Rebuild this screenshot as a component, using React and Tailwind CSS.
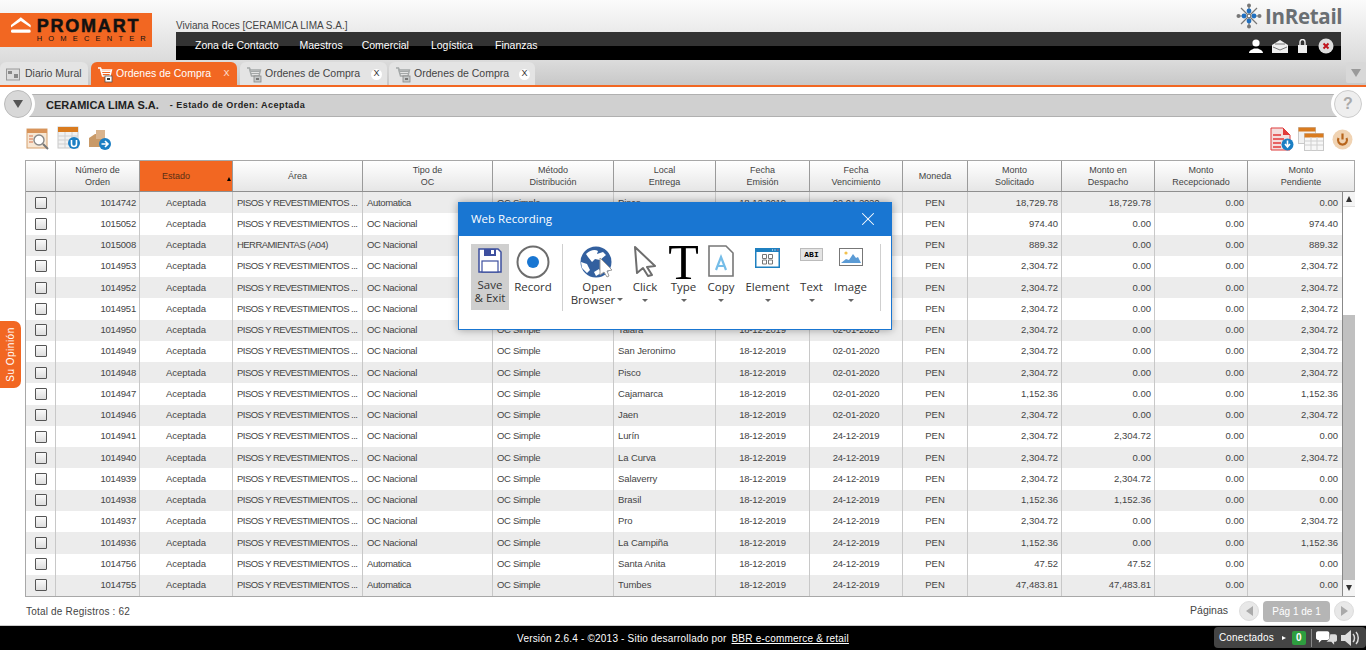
import { X } from "lucide-react";

const A = "2,304.72";
const P = "PISOS Y REVESTIMIENTOS ...";
const rows = [
    ["1014742", P, "Automatica", "OC Simple", "Pisco", "02-01-2020", "18,729.78", "18,729.78", "0.00"],
    ["1015052", P, "OC Nacional", "OC Simple", "Lurin", "02-01-2020", "974.40", "0.00", "974.40"],
    ["1015008", "HERRAMIENTAS (A04)", "OC Nacional", "OC Simple", "Pisco", "02-01-2020", "889.32", "0.00", "889.32"],
    ["1014953", P, "OC Nacional", "OC Simple", "Pisco", "02-01-2020", A, "0.00", A],
    ["1014952", P, "OC Nacional", "OC Simple", "Pisco", "02-01-2020", A, "0.00", A],
    ["1014951", P, "OC Nacional", "OC Simple", "Pisco", "02-01-2020", A, "0.00", A],
    ["1014950", P, "OC Nacional", "OC Simple", "Talara", "02-01-2020", A, "0.00", A],
    ["1014949", P, "OC Nacional", "OC Simple", "San Jeronimo", "02-01-2020", A, "0.00", A],
    ["1014948", P, "OC Nacional", "OC Simple", "Pisco", "02-01-2020", A, "0.00", A],
    ["1014947", P, "OC Nacional", "OC Simple", "Cajamarca", "02-01-2020", "1,152.36", "0.00", "1,152.36"],
    ["1014946", P, "OC Nacional", "OC Simple", "Jaen", "02-01-2020", A, "0.00", A],
    ["1014941", P, "OC Nacional", "OC Simple", "Lurín", "24-12-2019", A, A, "0.00"],
    ["1014940", P, "OC Nacional", "OC Simple", "La Curva", "24-12-2019", A, "0.00", A],
    ["1014939", P, "OC Nacional", "OC Simple", "Salaverry", "24-12-2019", A, A, "0.00"],
    ["1014938", P, "OC Nacional", "OC Simple", "Brasil", "24-12-2019", "1,152.36", "1,152.36", "0.00"],
    ["1014937", P, "OC Nacional", "OC Simple", "Pro", "24-12-2019", A, "0.00", A],
    ["1014936", P, "OC Nacional", "OC Simple", "La Campiña", "24-12-2019", "1,152.36", "0.00", "1,152.36"],
    ["1014756", P, "Automatica", "OC Simple", "Santa Anita", "24-12-2019", "47.52", "47.52", "0.00"],
    ["1014755", P, "Automatica", "OC Simple", "Tumbes", "24-12-2019", "47,483.81", "47,483.81", "0.00"],
];

const headers = [
    ["w-[30px]", ""],
    ["w-[84px]", "Número de", "Orden"],
    ["w-[93px]", "Estado"],
    ["w-[130px]", "Área"],
    ["w-[130px]", "Tipo de", "OC"],
    ["w-[121px]", "Método", "Distribución"],
    ["w-[102px]", "Local", "Entrega"],
    ["w-[94px]", "Fecha", "Emisión"],
    ["w-[93px]", "Fecha", "Vencimiento"],
    ["w-[65px]", "Moneda"],
    ["w-[94px]", "Monto", "Solicitado"],
    ["w-[93px]", "Monto en", "Despacho"],
    ["w-[93px]", "Monto", "Recepcionado"],
    ["w-[106px]", "Monto", "Pendiente"],
];

function CartIcon({ active }) {
    const c = active ? "#ffffff" : "#a4a8a8";
    return (
        <svg width="16" height="17" viewBox="0 0 16 17" className="shrink-0">
            <path d="M1 2h2.500l1 2h10l-1.500 6H5.500L3.500 3" fill="none" stroke={c} strokeWidth="1.4" />
            <path d="M5 5.500h9M5 7.500h8" stroke={c} strokeWidth="1" />
            <rect x="8" y="10" width="7" height="6" fill={active ? "#fff" : "#c4c8c8"} stroke={active ? "#555" : "#888"} strokeWidth="0.8" />
            <rect x="10" y="12" width="3" height="2" fill={active ? "#333" : "#777"} />
        </svg>
    );
}

function TabX({ active }) {
    return (
        <span
            className={`ml-auto mr-[5px] w-[11px] h-[11px] flex items-center justify-center text-[9px] rounded-full ${
                active ? "text-white/80" : "bg-white text-[#333333]"
            }`}
        >
            X
        </span>
    );
}

function Caret({ className = "" }) {
    return <span className={`block w-0 h-0 border-l-[3.5px] border-r-[3.5px] border-t-[3.5px] border-l-transparent border-r-transparent border-t-[#666666] ${className}`} />;
}

function RibbonItem({ icon, label, w }) {
    return (
        <div className={`${w} flex flex-col items-center`}>
            <div className="h-[35px] flex items-start justify-center">{icon}</div>
            <div className="mt-[1px] text-[11.5px] leading-[13px] text-[#333333] text-center whitespace-nowrap">{label}</div>
            <Caret className="mt-[6px]" />
        </div>
    );
}

function Popup() {
    return (
        <div className="absolute left-[458px] top-[202px] w-[434px] h-[128px] bg-white border border-[#1976d2] shadow-[0_0_8px_rgba(0,0,0,0.35)] font-['Open_Sans',sans-serif]">
            <div className="h-[33px] pb-[2px] bg-[#1976d2] flex items-center justify-between pl-[12px] pr-[12px] text-white text-[11.5px]">
                <span>Web Recording</span>
                <X size={22} strokeWidth={1.1} />
            </div>
            <div className="flex items-start pt-[8px] pl-[12px]">
                <div className="w-[38px] h-[66px] bg-[#cfcfcf] flex flex-col items-center">
                    <svg width="24" height="25" viewBox="0 0 24 25" className="mt-[4px]">
                        <path d="M1 1h19l3 3v20H1z" fill="#ffffff" stroke="#3d4f9f" strokeWidth="1.5" />
                        <rect x="6" y="1" width="12" height="7" fill="#3d4f9f" />
                        <rect x="13" y="2" width="3" height="4" fill="#ffffff" />
                        <rect x="4" y="13" width="16" height="11" fill="#ffffff" stroke="#3d4f9f" strokeWidth="1.2" />
                    </svg>
                    <div className="mt-[5px] text-[11.5px] leading-[13px] text-[#333333] text-center whitespace-nowrap">
                        Save
                        <br />
                        &amp; Exit
                    </div>
                </div>
                <div className="w-[48px] flex flex-col items-center">
                    <svg width="34" height="34" viewBox="0 0 34 34" className="mt-[1px]">
                        <circle cx="17" cy="17" r="15.500" fill="#fff" stroke="#6d6d6d" strokeWidth="2" />
                        <circle cx="17" cy="17" r="6" fill="#1976d2" />
                    </svg>
                    <div className="mt-[1px] text-[11.5px] leading-[13px] text-[#333333]">Record</div>
                </div>
                <div className="w-px h-[67px] bg-[#cfcfcf] ml-[5px]" />
                <div className="w-[68px] flex flex-col items-center">
                    <svg width="34" height="33" viewBox="0 0 34 33" className="mt-[2px]">
                        <circle cx="16" cy="16" r="15.500" fill="#33609f" />
                        <path d="M6 8c4-4 9-5 12-3l-1 3 6-2 3 3-6 5-5-1-3 3-4-5zM1 16l6 2 3 6-3 3-5-5zM14 26l5-3 2 4-5 3z" fill="#ffffff" />
                        <path d="M20 12l12 12-5 1 2 5-2 1-3-5-4 3z" fill="#ffffff" stroke="#999999" strokeWidth="1" />
                    </svg>
                    <div className="mt-[1px] text-[11.5px] leading-[13px] text-[#333333] text-center whitespace-nowrap">
                        Open
                        <br />
                        <span className="inline-flex items-center gap-[2px]">
                            Browser
                            <Caret />
                        </span>
                    </div>
                </div>
                <RibbonItem
                    w="w-[28px]"
                    label="Click"
                    icon={
                        <svg width="24" height="32" viewBox="0 0 24 32" className="mt-[1px]">
                            <path d="M2 2l20 19-8 1 5 8-4 1-5-8-6 5z" fill="#ffffff" stroke="#6d6d6d" strokeWidth="2" strokeLinejoin="round" />
                        </svg>
                    }
                />
                <div className="w-[49px] flex flex-col items-center">
                    <div className="h-[35px] flex items-start justify-center font-['Liberation_Serif',serif] text-[50px] leading-[37px] text-black">T</div>
                    <div className="mt-[1px] text-[11.5px] leading-[13px] text-[#333333]">Type</div>
                    <Caret className="mt-[6px]" />
                </div>
                <RibbonItem
                    w="w-[26px]"
                    label="Copy"
                    icon={
                        <svg width="26" height="32" viewBox="0 0 26 32" className="mt-[1px]">
                            <path d="M1 1h17l7 7v23H1z" fill="#ffffff" stroke="#777777" strokeWidth="1.6" />
                            <path d="M8 25l5-13 5 13M10 21h6" fill="none" stroke="#75bde8" strokeWidth="2.2" />
                        </svg>
                    }
                />
                <RibbonItem
                    w="w-[67px]"
                    label="Element"
                    icon={
                        <svg width="25" height="20" viewBox="0 0 25 20" className="mt-[4px]">
                            <rect x="0" y="0" width="25" height="20" fill="#1f80c0" />
                            <rect x="1.500" y="4" width="22" height="14.500" fill="#ffffff" />
                            <path d="M17 2h1M19.500 2h1" stroke="#ffffff" strokeWidth="1.2" />
                            <path d="M22 2h1.500" stroke="#e0606a" strokeWidth="1.2" />
                            <path d="M7.500 6.500h4v4h-4zM13.500 6.500h4v4h-4zM7.500 12h4v4h-4zM13.500 12h4v4h-4z" fill="#fff" stroke="#777" strokeWidth="1" />
                        </svg>
                    }
                />
                <RibbonItem
                    w="w-[21px]"
                    label="Text"
                    icon={
                        <div className="mt-[4px] w-[23px] h-[13px] bg-[#e4e4e4] border border-[#bbbbbb] text-[8px] leading-[11px] font-bold text-black text-center font-['Liberation_Mono',monospace] shrink-0">
                            ABI
                        </div>
                    }
                />
                <RibbonItem
                    w="w-[57px]"
                    label="Image"
                    icon={
                        <svg width="24" height="18" viewBox="0 0 24 18" className="mt-[4px]">
                            <rect x="0.500" y="0.500" width="23" height="17" fill="#ffffff" stroke="#777777" />
                            <circle cx="7" cy="5" r="1.6" fill="#f2c14e" />
                            <path d="M2 15l5-4 3 1 4-6 3 4 2-1 3 6z" fill="#5b9bd5" />
                        </svg>
                    }
                />
                <div className="w-px h-[67px] bg-[#cfcfcf] ml-[1px]" />
            </div>
        </div>
    );
}

function Header() {
    return (
        <div className="h-[60px] bg-gradient-to-b from-[#fbfbfb] to-[#dcdcdc] flex shrink-0">
            <div className="mt-[13px] w-[152px] h-[34px] bg-[#f26722] shrink-0 flex items-start">
                <svg width="20" height="17" viewBox="0 0 20 17" className="ml-[11px] mt-[3px]">
                    <path d="M0 9L10 1l10 8v2.500L10 5 0 11.500z" fill="#fff" />
                    <rect x="0" y="13.500" width="20" height="3.500" rx="1.500" fill="#fff" />
                </svg>
                <div className="ml-[6px] mt-[5px] text-[#111111] leading-none">
                    <div className="text-[18px] leading-[16px] font-bold tracking-[1.8px] whitespace-nowrap [-webkit-text-stroke:0.5px_#111]">PROMART</div>
                    <div className="text-[7.5px] leading-[8px] tracking-[6.2px] mt-[1px] whitespace-nowrap">HOMECENTER</div>
                </div>
            </div>
            <div className="ml-[24px] flex-1 flex flex-col">
                <div className="h-[32px] pt-[20px] text-[10px] leading-[12px] text-[#444444] whitespace-nowrap">Viviana Roces [CERAMICA LIMA S.A.]</div>
                <div className="w-[1165px] h-[28px] bg-gradient-to-b from-[#333333] from-50% to-black to-50% flex items-center justify-between pl-[19px] pr-[7px] text-white text-[10.5px]">
                    <div className="flex">
                        <span className="mr-[21px]">Zona de Contacto</span>
                        <span className="mr-[19px]">Maestros</span>
                        <span className="mr-[22px]">Comercial</span>
                        <span className="mr-[22px]">Logística</span>
                        <span>Finanzas</span>
                    </div>
                    <div className="flex items-center gap-[8px]">
                        <svg width="16" height="14" viewBox="0 0 16 14">
                            <circle cx="8" cy="4" r="3.6" fill="#fff" />
                            <path d="M1 14c0-3 4-3.500 5-4.500h4c1 1 5 1.500 5 4.500z" fill="#fff" />
                        </svg>
                        <svg width="16" height="14" viewBox="0 0 16 14">
                            <path d="M0 6l8-5 8 5v8H0z" fill="#eeeeee" />
                            <path d="M3 5h10M1 8l7 3 7-3" stroke="#777" fill="none" strokeWidth="1" />
                        </svg>
                        <svg width="11" height="14" viewBox="0 0 11 14" className="ml-[1px]">
                            <rect x="1" y="6" width="9" height="8" fill="#eeeeee" />
                            <path d="M3 6V3a2.500 2.500 0 0 1 5 0v3" stroke="#eeeeee" fill="none" strokeWidth="1.4" />
                        </svg>
                        <svg width="16" height="16" viewBox="0 0 16 16" className="ml-[2px]">
                            <circle cx="8" cy="8" r="7.500" fill="#dddddd" />
                            <path d="M5.500 5.500l5 5M10.500 5.500l-5 5" stroke="#c0141c" strokeWidth="2" />
                        </svg>
                    </div>
                </div>
            </div>
        </div>
    );
}

function InRetail() {
    return (
        <div className="absolute left-[1236px] top-[3px] flex items-center gap-[3px]">
            <svg width="26" height="26" viewBox="0 0 26 26">
                <g stroke="#777777" strokeWidth="1.2" fill="none">
                    <path d="M13 2v22M2 13h22M5 5l16 16M21 5L5 21" />
                </g>
                <circle cx="13" cy="2.500" r="2" fill="#777" />
                <circle cx="13" cy="23.500" r="2" fill="#777" />
                <circle cx="2.500" cy="13" r="2" fill="#777" />
                <circle cx="23.500" cy="13" r="2" fill="#777" />
                <circle cx="13" cy="8" r="2.400" fill="#1f6fc0" />
                <circle cx="8" cy="13" r="2.400" fill="#1f6fc0" />
                <circle cx="18" cy="13" r="2.400" fill="#1f6fc0" />
                <circle cx="13" cy="18" r="2.400" fill="#1f6fc0" />
                <circle cx="13" cy="13" r="1.800" fill="#ffffff" stroke="#777" />
            </svg>
            <span className="text-[20.5px] leading-none font-bold text-[#6a6f73] font-['Open_Sans',sans-serif] tracking-[-0.3px]">InRetail</span>
        </div>
    );
}

function Tabs() {
    return (
        <div className="h-[27px] bg-gradient-to-b from-[#dcdcdc] to-[#c8c8c8] border-b-[2px] border-[#f26722] shrink-0 flex items-end text-[10.5px] relative">
            <div className="w-[88px] h-[23px] pt-[1px] rounded-t-md bg-[#e4e4e4] text-[#444444] flex items-center pl-[6px] gap-[5px]">
                <svg width="14" height="13" viewBox="0 0 14 13">
                    <rect x="0.500" y="1" width="13" height="11" fill="#dddddd" stroke="#999" />
                    <rect x="2" y="3" width="4" height="3" fill="#888" />
                    <rect x="8" y="6" width="4" height="4" fill="#888" />
                </svg>
                Diario Mural
            </div>
            <div className="ml-[3px] w-[146px] h-[23px] pt-[1px] rounded-t-md bg-[#f26722] text-white flex items-center pl-[6px] gap-[3px] whitespace-nowrap">
                <CartIcon active />
                Ordenes de Compra
                <TabX active />
            </div>
            <div className="ml-[3px] w-[147px] h-[23px] pt-[1px] rounded-t-md bg-[#e4e4e4] text-[#444444] flex items-center pl-[6px] gap-[3px] whitespace-nowrap">
                <CartIcon />
                Ordenes de Compra
                <TabX />
            </div>
            <div className="ml-[2px] w-[146px] h-[23px] pt-[1px] rounded-t-md bg-[#e4e4e4] text-[#444444] flex items-center pl-[6px] gap-[3px] whitespace-nowrap">
                <CartIcon />
                Ordenes de Compra
                <TabX />
            </div>
            <div className="absolute right-[0px] top-[2px] w-[20px] h-[21px] rounded-[2px] bg-[#d8d8d8] flex items-center justify-center">
                <span className="block w-0 h-0 border-l-[5px] border-r-[5px] border-t-[8px] border-l-transparent border-r-transparent border-t-[#9a9a9a]" />
            </div>
        </div>
    );
}

function TitleBar() {
    return (
        <div className="mt-[7px] h-[23px] ml-[20px] mr-[21px] shrink-0 bg-[#d0d0d0] border-t-[1px] border-b-[1px] border-[#b0b0b0] relative flex items-center pl-[26px] text-[#222222]">
            <div className="absolute left-[-16px] top-[-5px] w-[28px] h-[28px] rounded-full bg-[#d8d8d8] border border-[#bbbbbb] ring-[3px] ring-white flex items-center justify-center">
                <span className="block w-0 h-0 border-l-[5px] border-r-[5px] border-t-[8px] border-l-transparent border-r-transparent border-t-[#555555]" />
            </div>
            <span className="text-[11px] font-semibold whitespace-nowrap">CERAMICA LIMA S.A.</span>
            <span className="ml-[11px] text-[9px] font-semibold tracking-[0.45px] whitespace-nowrap">- Estado de Orden: Aceptada</span>
            <div className="absolute right-[-17px] top-[-5px] w-[28px] h-[28px] rounded-full bg-[#eeeeee] border border-[#cccccc] ring-[3px] ring-white flex items-center justify-center text-[16px] font-bold text-[#aaaaaa]">
                ?
            </div>
        </div>
    );
}

function Toolbar() {
    return (
        <div className="h-[43px] shrink-0 pl-[26px] pr-[13px] pb-[9px] flex items-end justify-between">
            <div className="flex items-end gap-[7px]">
                <svg width="24" height="24" viewBox="0 0 24 24">
                    <rect x="1" y="2" width="20" height="19" fill="#f7e7d4" stroke="#d6a06c" />
                    <rect x="1" y="2" width="20" height="4" fill="#d9945a" />
                    <path d="M3 9h4M3 12h4M3 15h4" stroke="#d9744a" strokeWidth="1.2" />
                    <circle cx="13" cy="13" r="5" fill="#ffffff" stroke="#888888" strokeWidth="1.4" />
                    <path d="M17 17l5 5" stroke="#777777" strokeWidth="2" />
                </svg>
                <svg width="24" height="24" viewBox="0 0 24 24" className="mb-[1px]">
                    <rect x="1" y="1" width="20" height="21" fill="#f1f1f1" stroke="#c9c9c9" />
                    <rect x="1" y="1" width="20" height="5" fill="#d97b1f" />
                    <path d="M1 10h20M1 14h20M1 18h20M8 6v16M15 6v16" stroke="#cfcfcf" />
                    <circle cx="17" cy="17" r="6" fill="#1b7fc4" />
                    <path d="M14.500 14v4a2.500 2.500 0 0 0 5 0v-4" stroke="#fff" strokeWidth="1.6" fill="none" />
                </svg>
                <svg width="24" height="24" viewBox="0 0 24 24">
                    <path d="M1 11l6-4h8v13H1z" fill="#c99a68" />
                    <path d="M8 3h9v9H8z" fill="#d9b48e" />
                    <circle cx="17" cy="17" r="6" fill="#1b7fc4" />
                    <path d="M13.500 17h6M17 14l3 3-3 3" stroke="#fff" strokeWidth="1.6" fill="none" />
                </svg>
            </div>
            <div className="flex items-end gap-[4px]">
                <svg width="24" height="24" viewBox="0 0 24 24">
                    <path d="M1 1h12l7 7v15H1z" fill="#f4dede" stroke="#dd3a3a" />
                    <path d="M13 1l7 7h-7z" fill="#e23a3a" />
                    <path d="M3 8h8M3 12h11M3 16h8M3 20h8" stroke="#e23a3a" strokeWidth="1.5" />
                    <circle cx="17.500" cy="17.500" r="6" fill="#1b7fc4" />
                    <path d="M17.500 13.500v6M15 17l2.500 3 2.500-3" stroke="#fff" strokeWidth="1.6" fill="none" />
                </svg>
                <svg width="26" height="24" viewBox="0 0 26 24">
                    <rect x="0.500" y="0.500" width="17" height="16" fill="#f1f1f1" stroke="#c9c9c9" />
                    <rect x="0.500" y="0.500" width="17" height="4" fill="#d97b1f" />
                    <rect x="6.500" y="6.500" width="19" height="17" fill="#f7f7f7" stroke="#c9c9c9" />
                    <rect x="6.500" y="6.500" width="19" height="4" fill="#d97b1f" />
                    <path d="M6 14h19M6 18h19M13 10v14M19 10v14" stroke="#cfcfcf" />
                </svg>
                <svg width="21" height="21" viewBox="0 0 21 21" className="ml-[4px] mb-[1px]">
                    <circle cx="10.500" cy="10.500" r="10" fill="#f0d3b3" />
                    <path d="M6.500 9a4.500 4.500 0 1 0 8 0" stroke="#b8651c" strokeWidth="2.200" fill="none" />
                    <path d="M10.500 4.500v6" stroke="#b8651c" strokeWidth="2.200" />
                </svg>
            </div>
        </div>
    );
}

function Cell({ w, right, center, className = "", children }) {
    return (
        <div
            className={`${w} h-full shrink-0 flex items-center border-r border-[#c8c8c8] last:border-r-0 whitespace-nowrap overflow-hidden pl-[4px] ${
                right ? "justify-end pr-[3px]" : center ? "justify-center pr-[4px]" : "pr-[2px]"
            } ${className}`}
        >
            {children}
        </div>
    );
}

function Table() {
    return (
        <div className="mx-[25px] h-[437px] w-[1330px] shrink-0 border border-[#a8a8a8] text-[9.5px] text-[#444444] flex flex-col">
            <div className="h-[31px] flex shrink-0 border-b border-[#8f8f8f]">
                {headers.map(([w, a, b], i) => (
                    <div
                        key={i}
                        className={`${w} shrink-0 flex flex-col items-center justify-center text-[9px] leading-[12px] relative border-r border-[#9a9a9a] last:border-r-0 ${
                            i === 2 ? "bg-[#f26722] text-[#5a2f14] pr-[20px]" : "bg-gradient-to-b from-white to-[#e6e6e6]"
                        }`}
                    >
                        <span>{a}</span>
                        {b && <span>{b}</span>}
                        {i === 2 && <span className="absolute right-[1px] bottom-[10px] block w-0 h-0 border-l-[2.5px] border-r-[2.5px] border-b-[4px] border-l-transparent border-r-transparent border-b-black" />}
                    </div>
                ))}
            </div>
            <div className="flex flex-1 min-h-0">
                <div className="flex-1 flex flex-col">
                    {rows.map((r, i) => (
                        <div key={r[0]} className={`flex-1 flex items-center ${i % 2 === 0 ? "bg-[#ececec]" : "bg-white"}`}>
                            <div className="w-[30px] h-full flex items-center justify-center border-r border-[#c8c8c8]">
                                <span className="block w-[12px] h-[12px] border border-[#555555] bg-gradient-to-b from-[#fafafa] to-[#dddddd] rounded-[1px]" />
                            </div>
                            <Cell w="w-[84px]" right className="tracking-[-0.2px]">{r[0]}</Cell>
                            <Cell w="w-[93px]" center>Aceptada</Cell>
                            <Cell w="w-[130px]" className="tracking-[-0.55px]">{r[1]}</Cell>
                            <Cell w="w-[130px]" className="tracking-[-0.35px]">{r[2]}</Cell>
                            <Cell w="w-[121px]" className="tracking-[-0.3px]">{r[3]}</Cell>
                            <Cell w="w-[102px]" className="tracking-[-0.1px]">{r[4]}</Cell>
                            <Cell w="w-[94px]" center className="tracking-[-0.2px]">18-12-2019</Cell>
                            <Cell w="w-[93px]" center className="tracking-[-0.2px]">{r[5]}</Cell>
                            <Cell w="w-[65px]" center>PEN</Cell>
                            <Cell w="w-[94px]" right>{r[6]}</Cell>
                            <Cell w="w-[93px]" right>{r[7]}</Cell>
                            <Cell w="w-[93px]" right>0.00</Cell>
                            <Cell w="w-[94px]" right><span className="mr-[1px]">{r[8]}</span></Cell>
                        </div>
                    ))}
                </div>
                <div className="w-[13px] shrink-0 bg-white border-l border-[#888888] flex flex-col items-center">
                    <div className="w-full h-[15px] shrink-0 border-b border-[#dddddd] bg-[#f4f4f4] flex items-center justify-center">
                        <span className="block w-0 h-0 border-l-[3px] border-r-[3px] border-b-[6px] border-l-transparent border-r-transparent border-b-[#333333]" />
                    </div>
                    <div className="mt-[108px] w-full h-[265px] bg-[#c0c0c0]" />
                    <div className="flex-1 w-full flex items-center justify-center bg-[#f4f4f4]">
                        <span className="block w-0 h-0 border-l-[3px] border-r-[3px] border-t-[6px] border-l-transparent border-r-transparent border-t-[#333333]" />
                    </div>
                </div>
            </div>
        </div>
    );
}

function Pager() {
    return (
        <div className="h-[28px] shrink-0 mx-[25px] w-[1330px] flex items-center justify-between text-[10px] text-[#444444]">
            <span className="ml-[1px] tracking-[0.2px]">Total de Registros : 62</span>
            <div className="flex items-center mr-[1px]">
                <span className="mr-[11px] text-[10.5px]">Páginas</span>
                <div className="w-[20px] h-[20px] rounded-full bg-[#e8e8e8] border border-[#dddddd] flex items-center justify-center">
                    <span className="block w-0 h-0 border-t-[5px] border-b-[5px] border-r-[7px] border-t-transparent border-b-transparent border-r-[#aaaaaa]" />
                </div>
                <div className="ml-[4px] w-[67px] h-[21px] rounded-[4px] bg-[#b5b5b5] text-white flex items-center justify-center">Pág 1 de 1</div>
                <div className="ml-[4px] w-[20px] h-[20px] rounded-full bg-[#e8e8e8] border border-[#dddddd] flex items-center justify-center">
                    <span className="block w-0 h-0 border-t-[5px] border-b-[5px] border-l-[7px] border-t-transparent border-b-transparent border-l-[#aaaaaa]" />
                </div>
            </div>
        </div>
    );
}

function Footer() {
    return (
        <div className="h-[25px] shrink-0 bg-black border-t border-[#cccccc] text-white text-[10px] relative flex items-center justify-center">
            <span className="tracking-[0.2px]">
                Versión 2.6.4 - ©2013 - Sitio desarrollado por <span className="ml-[2px] underline">BBR e-commerce &amp; retail</span>
            </span>
            <div className="absolute right-[0px] top-[1px] w-[152px] h-[21px] rounded-[4px] bg-[#444444] flex items-center pl-[5px]">
                <span className="tracking-[0.15px]">Conectados</span>
                <span className="ml-[8px] block w-0 h-0 border-t-[2.5px] border-b-[2.5px] border-l-[4px] border-t-transparent border-b-transparent border-l-white" />
                <span className="ml-[6px] w-[14px] h-[14px] rounded-[2px] bg-[#2e9e3f] flex items-center justify-center font-bold">0</span>
                <span className="ml-[5px] w-px h-[18px] bg-[#888888]" />
                <svg width="21" height="16" viewBox="0 0 22 16" className="ml-[4px]">
                    <path d="M2 1h10c1 0 2 1 2 2v5c0 1-1 2-2 2H6l-3 3v-3H2c-1 0-2-1-2-2V3c0-1 1-2 2-2z" fill="#fff" />
                    <path d="M15 4h5c1 0 2 1 2 2v4c0 1-1 2-2 2h-1v3l-3-3h-5l3-3z" fill="#ddd" />
                </svg>
                <svg width="20" height="16" viewBox="0 0 20 16" className="ml-[4px]">
                    <path d="M0 5h4l6-5v16l-6-5H0z" fill="#dddddd" />
                    <path d="M12 4c2 2 2 6 0 8M15 2c3 3 3 9 0 12" stroke="#dddddd" fill="none" strokeWidth="1.500" />
                </svg>
            </div>
        </div>
    );
}

export default function App() {
    return (
        <div className="relative w-[1366px] h-[650px] overflow-hidden bg-white flex flex-col font-['Liberation_Sans',Arial,sans-serif]">
            <Header />
            <Tabs />
            <TitleBar />
            <Toolbar />
            <Table />
            <Pager />
            <Footer />
            <InRetail />
            <div className="absolute left-0 top-[321px] w-[21px] h-[67px] bg-[#f26722] rounded-r-[7px] flex items-center justify-center">
                <span className="text-white text-[10px] tracking-[0.5px] whitespace-nowrap -rotate-90">Su Opinión</span>
            </div>
            <Popup />
        </div>
    );
}
